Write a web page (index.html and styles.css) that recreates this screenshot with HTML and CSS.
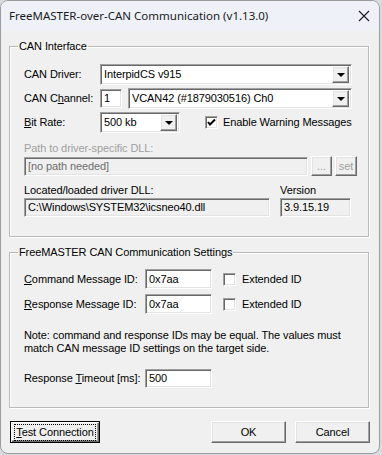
FILE: index.html
```html
<!DOCTYPE html>
<html>
<head>
<meta charset="utf-8">
<link rel="stylesheet" href="styles.css">
</head>
<body>
<div class="window">
  <div class="titlebar">
    <span class="title">FreeMASTER-over-CAN Communication (v1.13.0)</span>
    <svg class="close" width="12" height="12" viewBox="0 0 12 12"><path d="M1 1 L11 11 M11 1 L1 11" stroke="#1a1a1a" stroke-width="1.1" fill="none"/></svg>
  </div>
  <div class="client">
    <fieldset class="group g1">
      <legend>CAN Interface</legend>
      <div class="gbody">
        <div class="row r-driver">
          <span class="lbl w76">CAN Driver:</span>
          <div class="combo sunken w252"><span class="val">InterpidCS v915</span><span class="dd raised"><i></i></span></div>
        </div>
        <div class="row r-chan">
          <span class="lbl w76">CAN C<u>h</u>annel:</span>
          <div class="edit sunken w22 h19"><span class="val">1</span></div>
          <div class="combo sunken w224 ml6"><span class="val">VCAN42 (#1879030516) Ch0</span><span class="dd raised"><i></i></span></div>
        </div>
        <div class="row r-bit">
          <span class="lbl w76"><u>B</u>it Rate:</span>
          <div class="combo sunken w80"><span class="val">500 kb</span><span class="dd raised"><i></i></span></div>
          <span class="check sunken ml25 checked"><svg width="9" height="9" viewBox="0 0 9 9"><path d="M1 4 L3 6.5 L8 1.5" stroke="#000" stroke-width="2" fill="none"/></svg></span>
          <span class="lbl ml5">Enable Warning Messages</span>
        </div>
        <div class="lbl disabled t-path">Path to driver-specific DLL:</div>
        <div class="row r-path">
          <div class="edit sunken ro w284 h19"><span class="val grey">[no path needed]</span></div>
          <button class="btn raised small w21 ml3 disabled">...</button>
          <button class="btn raised small w22 ml3 disabled">set</button>
        </div>
        <div class="row t-located">
          <span class="lbl w256">Located/loaded driver DLL:</span>
          <span class="lbl">Version</span>
        </div>
        <div class="row r-located">
          <div class="edit sunken ro w246 h19"><span class="val">C:\Windows\SYSTEM32\icsneo40.dll</span></div>
          <div class="edit sunken ro w71 h19 ml10"><span class="val">3.9.15.19</span></div>
        </div>
      </div>
    </fieldset>

    <fieldset class="group g2">
      <legend>FreeMASTER CAN Communication Settings</legend>
      <div class="gbody">
        <div class="row r-cmd">
          <span class="lbl w121"><u>C</u>ommand Message ID:</span>
          <div class="edit sunken w67 h20"><span class="val">0x7aa</span></div>
          <span class="check sunken ml11"></span>
          <span class="lbl ml6">Extended ID</span>
        </div>
        <div class="row r-resp">
          <span class="lbl w121"><u>R</u>esponse Message ID:</span>
          <div class="edit sunken w67 h20"><span class="val">0x7aa</span></div>
          <span class="check sunken ml11"></span>
          <span class="lbl ml6">Extended ID</span>
        </div>
        <p class="note">Note: command and response IDs may be equal. The values must match CAN message ID settings on the target side.</p>
        <div class="row r-timeout">
          <span class="lbl w121">Response <u>T</u>imeout [ms]:</span>
          <div class="edit sunken w67 h19"><span class="val">500</span></div>
        </div>
      </div>
    </fieldset>

    <div class="buttons">
      <button class="btn default w90"><span class="focus"><u>T</u>est Connection</span></button>
      <span class="spacer"></span>
      <button class="btn raised w75">OK</button>
      <button class="btn raised w75 ml9">Cancel</button>
    </div>
  </div>
</div>
</body>
</html>
```

FILE: styles.css
```css
* { box-sizing: border-box; }
html, body { margin: 0; padding: 0; }
body {
  background: #d9dbe0;
  width: 382px;
  height: 455px;
  overflow: hidden;
  font-family: "Liberation Sans", Arial, sans-serif;
  font-size: 11px;
  letter-spacing: -0.1px;
  color: #000;
}
.window {
  width: 380px;
  height: 454px;
  border: 1px solid #9c9c9c;
  border-radius: 8px;
  background: #f0f0f0;
  overflow: hidden;
}
.titlebar {
  height: 30px;
  background: #eef2f8;
  display: flex;
  align-items: center;
  padding-left: 8px;
  padding-right: 9px;
}
.title {
  font-family: "Noto Sans", "Open Sans", sans-serif;
  font-size: 11.5px;
  letter-spacing: 0;
  color: #1a1a1a;
  flex: 1;
  margin-top: -1px;
}
.close { display: block; }
.client {
  padding: 9px 9px 0 8px;
}
.group {
  margin: 0;
  padding: 0;
  border: 1px solid #b9b9b9;
  box-shadow: inset 1px 1px 0 #fff, 1px 1px 0 #fff;
  min-width: 0;
  width: 360px;
}
.group legend {
  padding: 0 1px;
  margin: 0 0 0 8px;
  line-height: 13px;
  height: 13px;
}
.gbody { padding: 11px 0 19px 14px; }
.g2 { margin-top: 9px; }
.g2 .gbody { padding-top: 10px; }

.row { display: flex; align-items: center; }
.lbl { line-height: 13px; white-space: nowrap; display: block; }
.lbl.disabled { color: #a0a0a0; }
u { text-decoration: underline; text-underline-offset: 1px; }

.w22 { width: 22px; } .w21 { width: 21px; } .w67 { width: 67px; } .w71 { width: 71px; }
.w75 { width: 75px; } .w76 { width: 76px; } .w80 { width: 80px; } .w90 { width: 90px; }
.w121 { width: 121px; } .w224 { width: 224px; } .w246 { width: 246px; } .w252 { width: 252px; }
.w256 { width: 256px; } .w284 { width: 284px; }
.h19 { height: 19px; } .h20 { height: 20px; }
.ml3 { margin-left: 3px; } .ml5 { margin-left: 5px; } .ml6 { margin-left: 6px; }
.ml9 { margin-left: 9px; } .ml10 { margin-left: 10px; } .ml11 { margin-left: 11px; } .ml25 { margin-left: 25px; }

.sunken {
  border: 1px solid;
  border-color: #a0a0a0 #fff #fff #a0a0a0;
  box-shadow: inset 1px 1px 0 #696969, inset -1px -1px 0 #e3e3e3;
  background: #fff;
}
.raised {
  border: 1px solid;
  border-color: #fff #696969 #696969 #fff;
  box-shadow: inset -1px -1px 0 #a0a0a0, inset 1px 1px 0 #e3e3e3;
  background: #f0f0f0;
}
.edit, .combo {
  display: flex;
  align-items: center;
  padding-left: 3px;
}
.edit.ro { background: #f0f0f0; }
.combo { height: 21px; padding-right: 2px; }
.val { flex: 1; white-space: nowrap; overflow: hidden; line-height: 13px; }
.val.grey { color: #6d6d6d; }
.dd {
  width: 17px;
  height: 17px;
  display: flex;
  align-items: center;
  justify-content: center;
}
.dd i {
  display: block;
  width: 0; height: 0;
  border-left: 4px solid transparent;
  border-right: 4px solid transparent;
  border-top: 4px solid #000;
  margin-top: 1px;
}
.check {
  width: 13px;
  height: 13px;
  display: flex;
  align-items: center;
  justify-content: center;
  flex: none;
}
.check svg { display: block; }

.t-path { margin-top: 9px; }
.r-driver { height: 21px; }
.r-chan { margin-top: 3px; height: 21px; }
.r-bit { margin-top: 3px; height: 21px; }
.r-path { margin-top: 1px; height: 20px; }
.t-located { margin-top: 8px; height: 13px; }
.r-located { margin-top: 1px; height: 19px; }

.r-cmd { height: 20px; }
.r-resp { margin-top: 5px; height: 20px; }
.note { margin: 15px 0 0 0; line-height: 13px; width: 330px; }
.r-timeout { margin-top: 13px; height: 20px; }

.btn {
  font-family: inherit;
  font-size: 11px;
  letter-spacing: -0.1px;
  color: #000;
  padding: 0;
  height: 22px;
  display: flex;
  align-items: center;
  justify-content: center;
  line-height: 13px;
}
.btn.small { height: 20px; }
.btn.disabled { color: #a0a0a0; }
.btn.default {
  border: 1px solid #000;
  background: #f0f0f0;
  box-shadow: inset 1px 1px 0 #fff, inset -1px -1px 0 #696969, inset -2px -2px 0 #a0a0a0;
}
.focus {
  border: 1px dotted #000;
  padding: 1px 1px;
  line-height: 13px;
}
.buttons {
  display: flex;
  margin-top: 13px;
  padding-left: 1px;
}
.spacer { flex: 1; }
```
